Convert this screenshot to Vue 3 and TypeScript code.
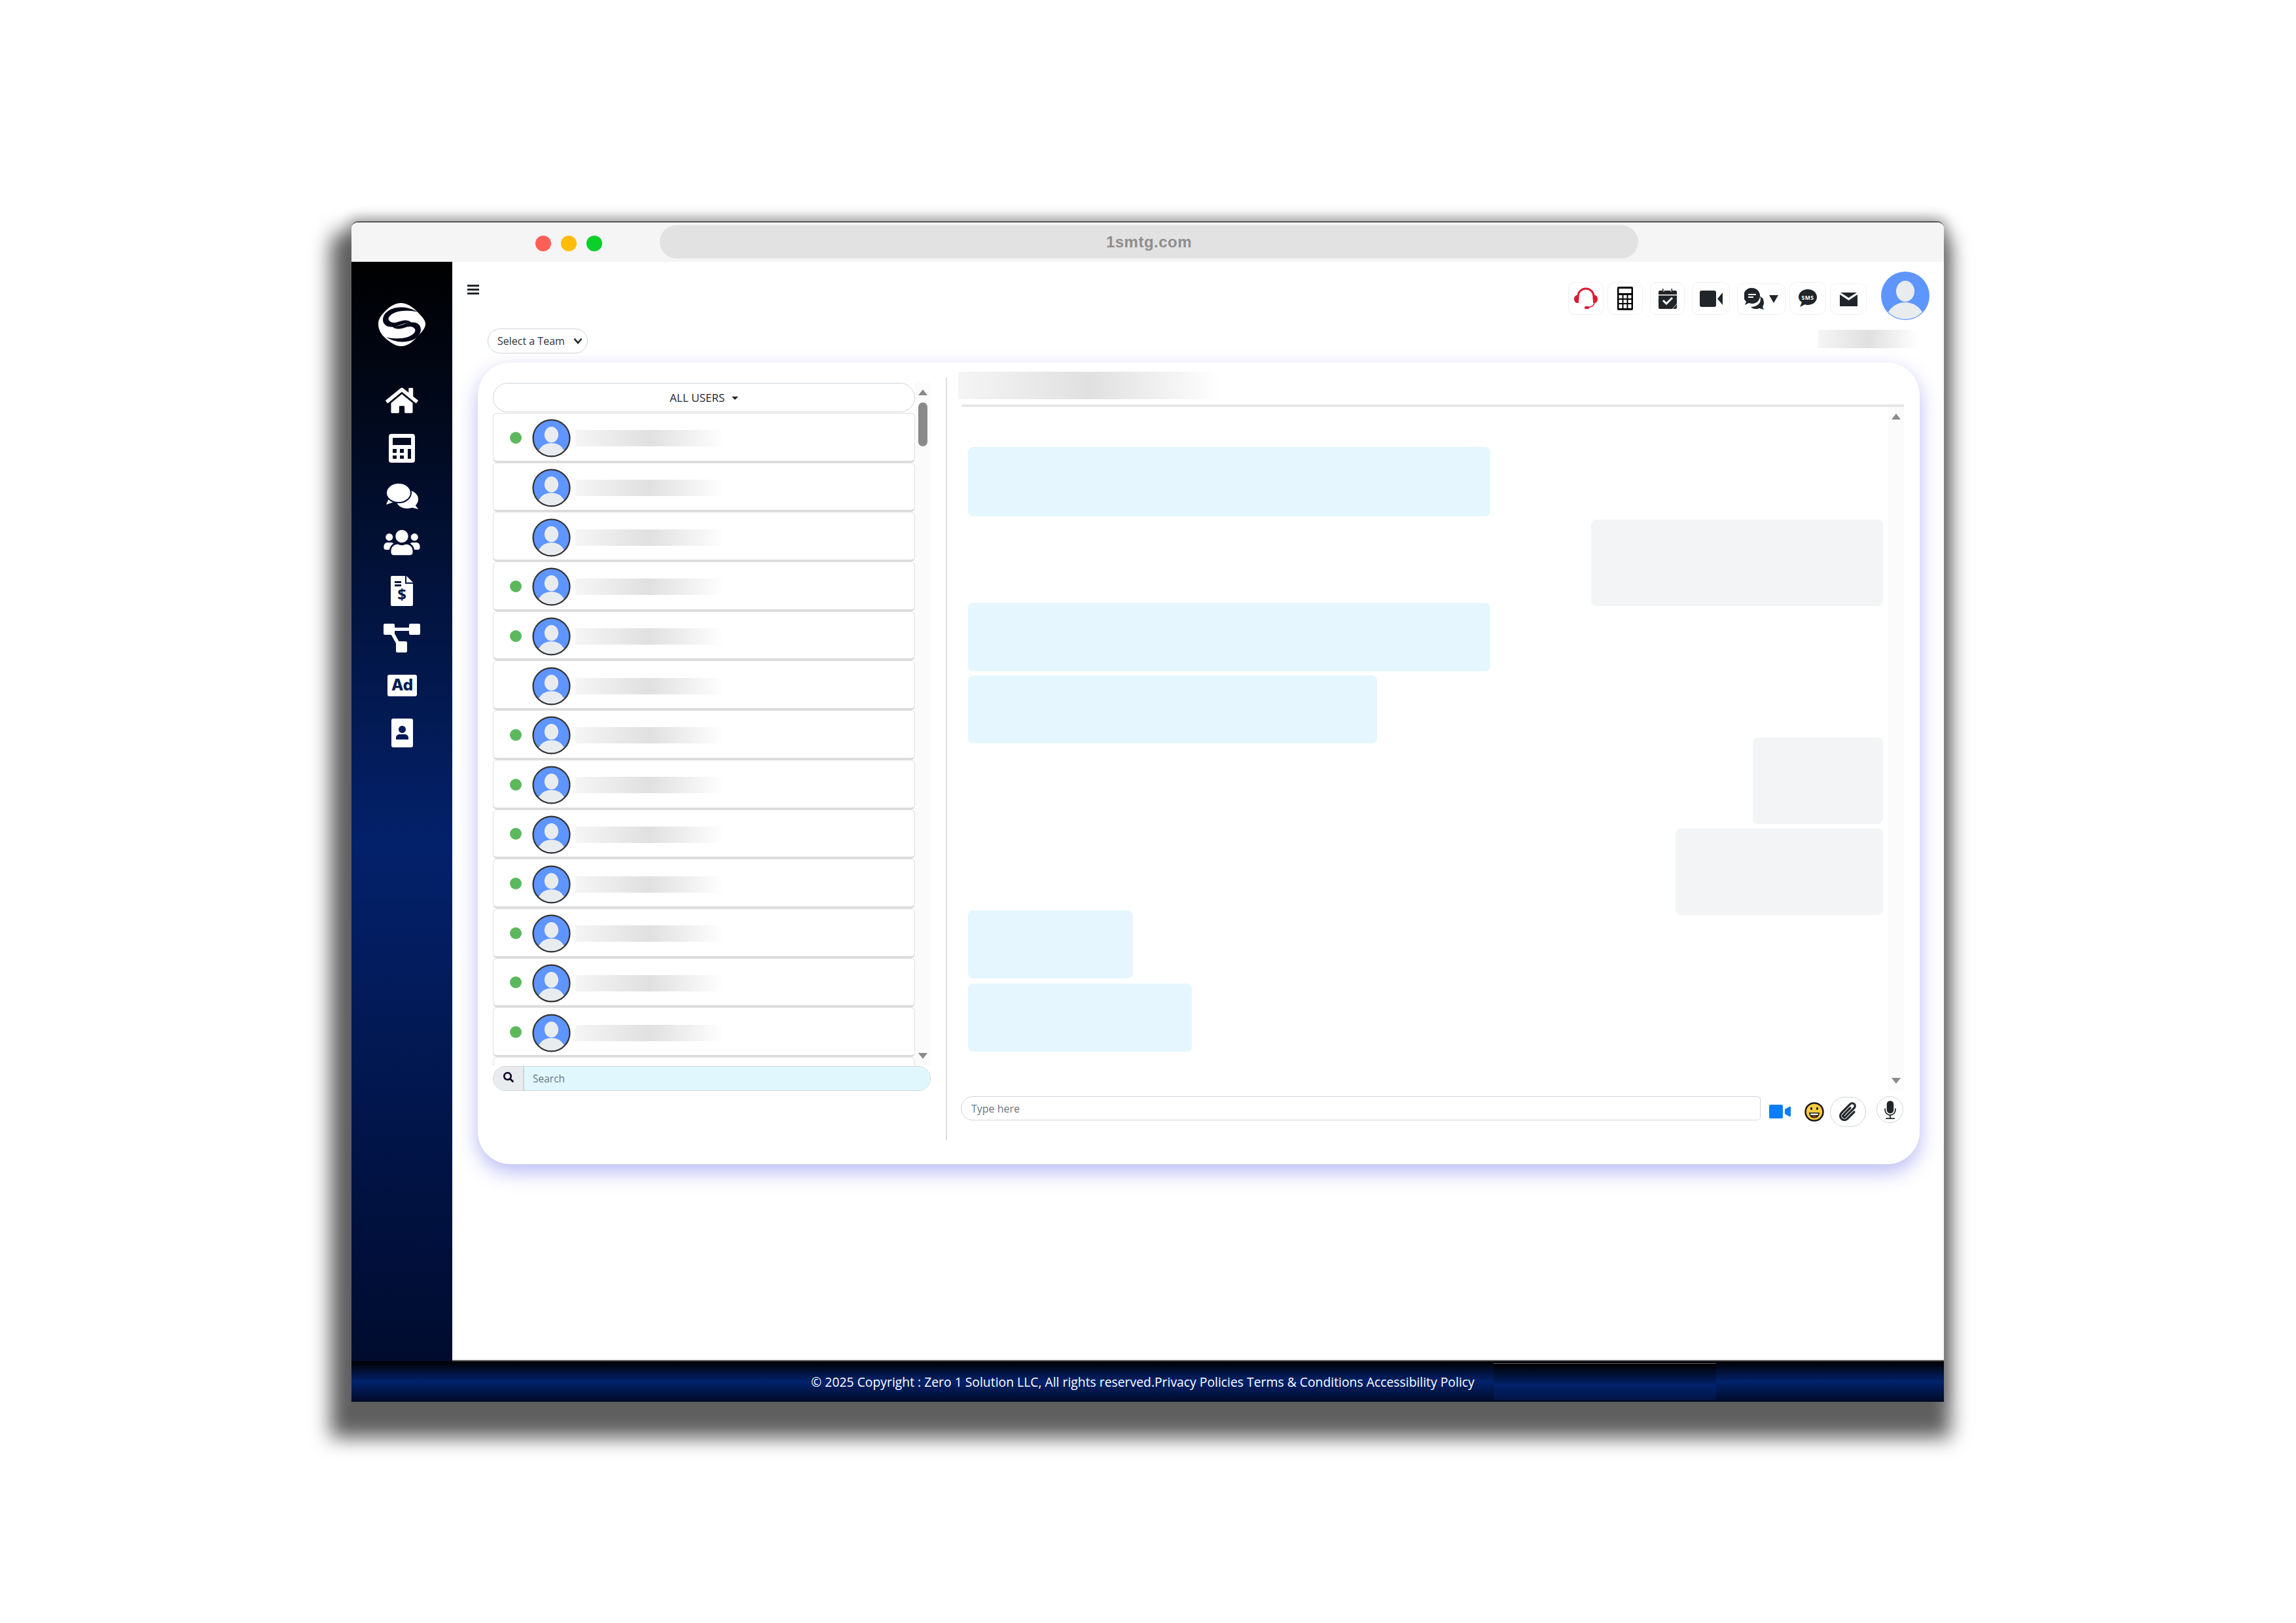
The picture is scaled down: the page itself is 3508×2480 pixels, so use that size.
<script setup lang="ts">
const contacts = [true, false, false, true, true, false, true, true, true, true, true, true, true]

const messages = [
  { side: 'in', width: 798, height: 106, gap: 0 },
  { side: 'out', width: 446, height: 132, gap: 5 },
  { side: 'in', width: 798, height: 105, gap: -5 },
  { side: 'in', width: 625, height: 104, gap: 6 },
  { side: 'out', width: 199, height: 132, gap: -9 },
  { side: 'out', width: 317, height: 132, gap: 7 },
  { side: 'in', width: 252, height: 104, gap: -7 },
  { side: 'in', width: 342, height: 104, gap: 8 },
]
</script>

<template>
  <div class="page">
    <div class="window">
      <div class="titlebar">
        <div class="lights">
          <span class="light red"></span>
          <span class="light yellow"></span>
          <span class="light green"></span>
        </div>
        <div class="url">1smtg.com</div>
      </div>

      <div class="body">
        <aside class="sidebar">
          <svg class="logo" viewBox="0 0 90 80" width="90" height="80">
            <path fill="#fff" d="M44 8C55 8 66 18 72 25C78 31 81 36 81 40C81 46 76 52 70 58C62 67 54 74 44 74C34 74 24 66 16 58C11 52 9 46 9 40C9 32 14 26 20 20C26 14 34 8 44 8Z" />
            <path fill="#000716" d="M69 22C56 13 36 12 24 20C15 26 14 36 19 41C25 47 36 44 44 41C52 38 60 37 63 43C60 34 50 33 42 36C34 39 28 39 25 34C23 30 28 25 36 22C46 19 60 19 69 22Z" />
            <path fill="#000716" transform="rotate(180 45 41)" d="M69 22C56 13 36 12 24 20C15 26 14 36 19 41C25 47 36 44 44 41C52 38 60 37 63 43C60 34 50 33 42 36C34 39 28 39 25 34C23 30 28 25 36 22C46 19 60 19 69 22Z" />
          </svg>

          <nav class="nav">
            <svg class="nav-icon" viewBox="0 0 576 512" width="50" height="44">
              <path d="M280.37 148.26L96 300.11V464a16 16 0 0 0 16 16l112.06-.29a16 16 0 0 0 15.92-16V368a16 16 0 0 1 16-16h64a16 16 0 0 1 16 16v95.64a16 16 0 0 0 16 16.05L464 480a16 16 0 0 0 16-16V300L295.67 148.26a12.19 12.19 0 0 0-15.3 0zM571.6 251.47L488 182.56V44.05a12 12 0 0 0-12-12h-56a12 12 0 0 0-12 12v72.61L318.47 43a48 48 0 0 0-61 0L4.34 251.47a12 12 0 0 0-1.6 16.9l25.5 31A12 12 0 0 0 45.15 301l235.22-193.74a12.19 12.19 0 0 1 15.3 0L530.9 301a12 12 0 0 0 16.9-1.6l25.5-31a12 12 0 0 0-1.7-16.93z" />
            </svg>
            <svg class="nav-icon" viewBox="0 0 40 44" width="40" height="44">
              <path fill-rule="evenodd" d="M4 0h32a4 4 0 0 1 4 4v36a4 4 0 0 1-4 4H4a4 4 0 0 1-4-4V4a4 4 0 0 1 4-4zM6 6v11h28V6zM6 23v6h6v-6zM17 23v6h6v-6zM29 23v15h5V23zM6 33v5h6v-5zM17 33v5h6v-5z" />
            </svg>
            <svg class="nav-icon gap-31" viewBox="0 0 50 40" width="50" height="40">
              <ellipse cx="33" cy="25" rx="17" ry="14" />
              <path d="M44 32l6 8-12-3z" />
              <path d="M5 24L1 33l12-4z" />
              <ellipse cx="20" cy="15" rx="19" ry="15" stroke="#010f38" stroke-width="2" />
            </svg>
            <svg class="nav-icon" viewBox="0 0 640 512" width="56" height="44">
              <path d="M96 224c35.3 0 64-28.7 64-64s-28.7-64-64-64-64 28.7-64 64 28.7 64 64 64zm448 0c35.3 0 64-28.7 64-64s-28.7-64-64-64-64 28.7-64 64 28.7 64 64 64zm32 32h-64c-17.6 0-33.5 7.1-45.1 18.6 40.3 22.1 68.9 62 75.1 109.4h66c17.7 0 32-14.3 32-32v-32c0-35.3-28.7-64-64-64zm-256 0c61.9 0 112-50.1 112-112S381.9 32 320 32 208 82.1 208 144s50.1 112 112 112zm76.8 32h-8.3c-20.8 10-43.9 16-68.5 16s-47.6-6-68.5-16h-8.3C179.6 288 128 339.6 128 403.2V432c0 26.5 21.5 48 48 48h288c26.5 0 48-21.5 48-48v-28.8c0-63.6-51.6-115.2-115.2-115.2zm-223.7-13.4C161.5 263.1 145.6 256 128 256H64c-35.3 0-64 28.7-64 64v32c0 17.7 14.3 32 32 32h65.9c6.3-47.4 34.9-87.3 75.2-109.4z" />
            </svg>
            <svg class="nav-icon" viewBox="0 0 34 46" width="34" height="46">
              <path fill-rule="evenodd" d="M2 0h20v12h12v32a2 2 0 0 1-2 2H2a2 2 0 0 1-2-2V2a2 2 0 0 1 2-2zM6 8v3h10V8zM6 13v3h10v-3z" />
              <path d="M24 0l10 10H24z" />
              <text class="dollar" x="17" y="37">$</text>
            </svg>
            <svg class="nav-icon gap-27" viewBox="0 0 56 44" width="56" height="44">
              <rect x="0" y="0" width="17" height="17" rx="2" />
              <rect x="39" y="0" width="17" height="17" rx="2" />
              <rect x="19" y="27" width="17" height="17" rx="2" />
              <rect x="14" y="6" width="28" height="5" />
              <path d="M10 14l5-2 9 16-5 2z" />
            </svg>
            <svg class="nav-icon gap-34" viewBox="0 0 45 33" width="45" height="33">
              <rect width="45" height="33" rx="3" />
              <text class="ad" x="22.5" y="24">Ad</text>
            </svg>
            <svg class="nav-icon gap-34" viewBox="0 0 33 44" width="33" height="44">
              <path fill-rule="evenodd" d="M3 0h27a3 3 0 0 1 3 3v38a3 3 0 0 1-3 3H3a3 3 0 0 1-3-3V3a3 3 0 0 1 3-3zM16.500 11a5.500 5.500 0 1 0 0 11 5.500 5.500 0 0 0 0-11zM7 32h19v-3c0-3-3-5-6-5h-7c-3 0-6 2-6 5z" />
            </svg>
          </nav>
        </aside>

        <main class="main">
          <div class="topbar">
            <svg class="menu" viewBox="0 0 18 15" width="18" height="15">
              <rect y="0" width="18" height="3" />
              <rect y="6" width="18" height="3" />
              <rect y="12" width="18" height="3" />
            </svg>
            <div class="tools">
              <button class="tool w54">
                <svg viewBox="0 0 36 36" width="36" height="36">
                  <path d="M6 20V15a12 12 0 0 1 24 0v5" fill="none" stroke="#dc1a32" stroke-width="3" />
                  <path d="M4 13c-3 1-4 3-4 6s2 6 5 6h2V13zM32 13c3 1 4 3 4 6s-2 6-5 6h-2V13z" fill="#dc1a32" />
                  <path d="M31 24c0 5-4 7-10 8" fill="none" stroke="#dc1a32" stroke-width="1.500" />
                  <rect x="16" y="30" width="7" height="4" rx="1.500" fill="#dc1a32" />
                </svg>
              </button>
              <button class="tool w54 ml6">
                <svg viewBox="0 0 24 36" width="24" height="36">
                  <path fill="#000" fill-rule="evenodd" d="M2 0h20a2 2 0 0 1 2 2v32a2 2 0 0 1-2 2H2a2 2 0 0 1-2-2V2a2 2 0 0 1 2-2zM2.500 3v7h19V3zM2.500 13v5h5v-5zM9.500 13v5h5v-5zM16.500 13v5h5v-5zM2.500 20v5h5v-5zM9.500 20v5h5v-5zM16.500 20v5h5v-5zM2.500 27v6h5v-6zM9.500 27v6h5v-6zM16.500 27v6h5v-6z" />
                </svg>
              </button>
              <button class="tool w53 ml11">
                <svg viewBox="0 0 28 32" width="28" height="32">
                  <path fill="#212529" fill-rule="evenodd" d="M2 4h4V1h1.500v5h1V4h10v2h1V1H21v3h5a2 2 0 0 1 2 2v4H0V6a2 2 0 0 1 2-2zM0 11.500h28V24l-7 8H2a2 2 0 0 1-2-2zM8 18l-2 2 6 6 10-10-2-2-8 8z" />
                  <path fill="#212529" d="M22 32l6-7v5a2 2 0 0 1-2 2z" />
                </svg>
              </button>
              <button class="tool w58 ml11">
                <svg viewBox="0 0 35 25" width="35" height="25">
                  <rect width="25" height="25" rx="3" fill="#212529" />
                  <path d="M27 12.500L35 3v19z" fill="#212529" />
                </svg>
              </button>
              <button class="tool w74 ml11 low">
                <svg viewBox="0 0 30 34" width="30" height="34">
                  <path d="M22 12a11 11 0 0 1 8 10c0 3-1 5-2 7l2 4-7-2c-2 1-4 1-6 1-3 0-5-1-7-3 8 0 15-4 15-12 0-2-1-4-3-5z" fill="#212529" />
                  <path d="M12 0a12 12 0 0 1 12 12c0 7-5 12-12 12-2 0-4-1-5-1l-6 3 2-5a12 12 0 0 1 9-21z" fill="#212529" />
                  <rect x="6" y="9" width="12" height="2" fill="#fff" />
                  <rect x="6" y="13" width="8" height="2" fill="#fff" />
                </svg>
                <span class="tool-caret"></span>
              </button>
              <button class="tool w56 ml6">
                <svg viewBox="0 0 28 28" width="28" height="28">
                  <path d="M14 0c8 0 14 5 14 12s-6 12-14 12c-1 0-3 0-4-1l-8 4 3-7c-3-2-5-5-5-8C0 5 6 0 14 0z" fill="#212529" />
                  <text class="sms" x="14" y="15.500">SMS</text>
                </svg>
              </button>
              <button class="tool w56 ml6 low">
                <svg viewBox="0 0 27 21" width="27" height="21">
                  <path d="M0 3l13.500 9L27 3v18H0z" fill="#212529" />
                  <path d="M1 0h25L13.500 8z" fill="#212529" />
                </svg>
              </button>
            </div>
            <svg class="profile" viewBox="0 0 74 74" width="74" height="74">
              <circle cx="37" cy="37" r="37" fill="#5f95ff" />
              <ellipse cx="37" cy="30" rx="14" ry="16" fill="#e9ecef" />
              <path d="M11 62A30 30 0 0 1 63 62A37 37 0 0 1 11 62Z" fill="#e9ecef" />
            </svg>
          </div>

          <div class="team-row">
            <select class="team-select">
              <option>Select a Team</option>
            </select>
            <div class="blur team-blur"></div>
          </div>

          <section class="card">
            <div class="users">
              <div class="user-list">
                <div class="user-rows">
                  <button class="all-users">ALL USERS <span class="caret"></span></button>
                  <div v-for="(online, i) in contacts" :key="i" class="user-row">
                    <span class="dot" :class="{ off: !online }"></span>
                    <svg class="avatar" viewBox="-2 -2 78 78" width="59" height="59">
                      <circle cx="37" cy="37" r="37" fill="#5f95ff" />
                      <ellipse cx="37" cy="30" rx="14" ry="16" fill="#e9ecef" />
                      <path d="M11 62A30 30 0 0 1 63 62A37 37 0 0 1 11 62Z" fill="#e9ecef" />
                      <circle cx="37" cy="37" r="37" fill="none" stroke="#333" stroke-width="3" />
                    </svg>
                    <div class="blur user-blur"></div>
                  </div>
                  <div class="user-row"></div>
                </div>
                <div class="scroll-track">
                  <span class="arrow up"></span>
                  <span class="thumb"></span>
                  <span class="arrow down list-down"></span>
                </div>
              </div>
              <div class="search">
                <span class="search-icon">
                  <svg viewBox="0 0 512 512" width="16" height="16">
                    <path d="M505 442.700L405.300 343c-4.500-4.500-10.600-7-17-7H372c27.600-35.300 44-79.700 44-128C416 93.100 322.900 0 208 0S0 93.100 0 208s93.100 208 208 208c48.300 0 92.700-16.400 128-44v16.300c0 6.400 2.500 12.500 7 17l99.700 99.700c9.400 9.400 24.600 9.400 33.900 0l28.300-28.300c9.400-9.400 9.400-24.600.1-34zM208 336c-70.700 0-128-57.200-128-128 0-70.700 57.200-128 128-128 70.700 0 128 57.200 128 128 0 70.700-57.200 128-128 128z" fill="#000228" />
                  </svg>
                </span>
                <input class="search-input" placeholder="Search" />
              </div>
            </div>

            <div class="divider"></div>

            <div class="chat">
              <div class="blur chat-title"></div>
              <div class="chat-rule"></div>
              <div class="chat-log">
                <div class="messages">
                  <div
                    v-for="(m, i) in messages"
                    :key="i"
                    class="bubble"
                    :class="m.side"
                    :style="{ width: m.width + 'px', height: m.height + 'px', marginTop: m.gap + 'px' }"
                  ></div>
                </div>
                <div class="scroll-track">
                  <span class="arrow up chat-up"></span>
                  <span class="arrow down chat-down"></span>
                </div>
              </div>
              <div class="composer">
                <input class="message-input" placeholder="Type here" />
                <svg class="send-video" viewBox="0 0 33 21" width="33" height="21">
                  <rect width="21" height="21" rx="2" fill="#0d7dff" />
                  <path d="M24 7l7-4c1-.5 2 0 2 1v13c0 1-1 1.500-2 1l-7-4z" fill="#0d7dff" />
                </svg>
                <svg class="emoji" viewBox="0 0 30 30" width="30" height="30">
                  <circle cx="15" cy="15" r="13.500" fill="#fbcb3c" stroke="#1a1a1a" stroke-width="2.500" />
                  <ellipse cx="10.500" cy="10" rx="1.500" ry="2.200" fill="#1a1a1a" />
                  <ellipse cx="19.500" cy="10" rx="1.500" ry="2.200" fill="#1a1a1a" />
                  <path d="M7 16h16c0 5-3.500 8.500-8 8.500S7 21 7 16z" fill="#1a1a1a" />
                  <path d="M9 17.500h12c0 1-.3 1.800-.7 2.500H9.700c-.4-.7-.7-1.500-.7-2.500z" fill="#fff" />
                  <path d="M11.500 22c1 .7 2.200 1 3.500 1s2.500-.3 3.500-1c-1-.6-2.200-.8-3.500-.8s-2.500.2-3.500.8z" fill="#e8402f" />
                </svg>
                <button class="attach">
                  <svg viewBox="0 0 16 16" width="34" height="34">
                    <g transform="rotate(45 8 8)">
                      <path d="M4.500 3a2.500 2.500 0 0 1 5 0v9a1.500 1.500 0 0 1-3 0V5a.5.5 0 0 1 1 0v7a.5.5 0 0 0 1 0V3a1.500 1.500 0 1 0-3 0v9a2.500 2.500 0 0 0 5 0V5a.5.5 0 0 1 1 0v7a3.500 3.500 0 1 1-7 0V3z" fill="#212529" stroke="#212529" stroke-width=".5" />
                    </g>
                  </svg>
                </button>
                <button class="mic">
                  <svg viewBox="0 0 16 16" width="28" height="28">
                    <path d="M5 3a3 3 0 0 1 6 0v5a3 3 0 0 1-6 0V3z" fill="#212529" />
                    <path d="M3.500 6.500A.5.5 0 0 1 4 7v1a4 4 0 0 0 8 0V7a.5.5 0 0 1 1 0v1a5 5 0 0 1-4.500 4.975V15h3a.5.5 0 0 1 0 1h-7a.5.5 0 0 1 0-1h3v-2.025A5 5 0 0 1 3 8V7a.5.5 0 0 1 .5-.5z" fill="#212529" />
                  </svg>
                </button>
              </div>
            </div>
          </section>
        </main>
      </div>

      <footer class="footer">
        <p class="copyright">© 2025 Copyright : Zero 1 Solution LLC, All rights reserved.Privacy Policies Terms &amp; Conditions Accessibility Policy</p>
        <div class="footer-patch"></div>
      </footer>
    </div>
  </div>
</template>

<style scoped>
.page {
  width: 3508px;
  height: 2480px;
  padding: 338px 0 0 537px;
  box-sizing: border-box;
  background: #fff;
  overflow: hidden;
  font-family: "Open Sans", "Liberation Sans", sans-serif;
}

.window {
  width: 2433px;
  height: 1804px;
  display: flex;
  flex-direction: column;
  background: #fff;
  border-radius: 10px 10px 0 0;
  border-top: 2px solid #555;
  box-sizing: border-box;
  box-shadow: -11px 34px 30px 21px #5f5f5f, 0 -2px 18px 4px rgba(0, 0, 0, 0.28);
}

.titlebar {
  height: 60px;
  flex: none;
  display: flex;
  align-items: flex-start;
  background: #f5f5f5;
  border-radius: 10px 10px 0 0;
}
.lights {
  display: flex;
  gap: 15px;
  margin: 20px 0 0 281px;
}
.light {
  width: 24px;
  height: 24px;
  border-radius: 50%;
}
.red {
  background: #ff5f57;
}
.yellow {
  background: #ffbd0a;
}
.green {
  background: #0bcf2a;
}
.url {
  width: 1495px;
  height: 51px;
  margin: 4px 0 0 88px;
  border-radius: 26px;
  background: #e2e2e2;
  color: #8e8e8e;
  font: bold 24px/51px "Liberation Sans", sans-serif;
  letter-spacing: 0.5px;
  text-align: center;
}

.body {
  flex: 1;
  display: flex;
  min-height: 0;
}

.sidebar {
  width: 154px;
  flex: none;
  display: flex;
  flex-direction: column;
  align-items: center;
  background: linear-gradient(180deg, #000 0%, #03216b 53%, #000b2e 100%);
}
.logo {
  margin-top: 55px;
}
.nav {
  margin-top: 55px;
  display: flex;
  flex-direction: column;
  align-items: center;
  gap: 29px;
}
.nav-icon {
  fill: #fff;
}
.gap-27 {
  margin-top: -2px;
}
.gap-31 {
  margin-top: 2px;
}
.gap-34 {
  margin-top: 5px;
}
.dollar {
  fill: #021648;
  font: bold 24px "Open Sans", sans-serif;
  text-anchor: middle;
}
.ad {
  fill: #021b55;
  font: 800 24px "Inter", sans-serif;
  text-anchor: middle;
}
.sms {
  fill: #fff;
  font: bold 8.5px "Open Sans", sans-serif;
  letter-spacing: 0.6px;
  text-anchor: middle;
}

.main {
  flex: 1;
  min-width: 0;
  border-bottom: 2px solid #6a6a6a;
}

.topbar {
  display: flex;
  align-items: flex-start;
  padding: 15px 22px 0 23px;
}
.menu {
  margin-top: 20px;
  fill: #212529;
}
.tools {
  margin-left: auto;
  margin-top: 16px;
  display: flex;
  align-items: flex-end;
}
.tool {
  height: 50px;
  padding: 0;
  display: flex;
  align-items: center;
  justify-content: center;
  background: #fff;
  border: 1.5px solid #eef0f3;
  border-radius: 10px;
  box-sizing: border-box;
}
.w53 {
  width: 53px;
}
.w54 {
  width: 54px;
}
.w56 {
  width: 56px;
}
.w58 {
  width: 58px;
}
.w74 {
  width: 74px;
  gap: 8px;
}
.ml6 {
  margin-left: 6px;
}
.ml11 {
  margin-left: 11px;
}
.low {
  height: 48px;
}
.tool-caret {
  width: 0;
  height: 0;
  border-left: 7px solid transparent;
  border-right: 7px solid transparent;
  border-top: 12px solid #212529;
}
.profile {
  margin-left: 22px;
  flex: none;
}

.team-row {
  display: flex;
  align-items: flex-start;
  justify-content: space-between;
  margin-top: 13px;
  padding: 0 39px 0 54px;
}
.team-select {
  width: 153px;
  height: 38px;
  padding: 0 0 0 14px;
  appearance: none;
  background: #fff url("data:image/svg+xml,%3Csvg xmlns='http://www.w3.org/2000/svg' viewBox='0 0 14 10'%3E%3Cpath d='M1.500 1.500L7 8l5.500-6.500' fill='none' stroke='%23212529' stroke-width='2.600'/%3E%3C/svg%3E") no-repeat right 7px center / 14px 10px;
  border: 1.5px solid #ced4da;
  border-radius: 19px;
  color: #333;
  font: 16px "Open Sans", sans-serif;
}
.blur {
  background: linear-gradient(90deg, #f5f5f5 0%, #e0e0e0 50%, #fff 100%);
}
.team-blur {
  width: 153px;
  height: 28px;
  margin-top: 2px;
}

.card {
  width: 2203px;
  height: 1225px;
  margin: 14px 0 0 39px;
  padding: 14px 24px 37px 23px;
  box-sizing: border-box;
  display: flex;
  background: #fff;
  border-radius: 50px;
  box-shadow: 0 12px 30px rgba(170, 170, 242, 0.8);
}

.users {
  width: 669px;
  flex: none;
  margin-top: 17px;
}
.user-list {
  height: 1043px;
  display: flex;
  overflow: hidden;
}
.user-rows {
  width: 645px;
  flex: none;
}
.all-users {
  width: 100%;
  height: 45px;
  margin-bottom: 1px;
  padding: 0;
  background: #fff;
  border: 1.5px solid #ced4da;
  border-radius: 23px;
  color: #212529;
  font: 17px "Open Sans", sans-serif;
}
.caret {
  display: inline-block;
  width: 0;
  height: 0;
  margin-left: 6px;
  vertical-align: 3px;
  border-left: 5px solid transparent;
  border-right: 5px solid transparent;
  border-top: 5px solid #212529;
}
.user-row {
  height: 75.7px;
  padding: 2px 0 0 25px;
  display: flex;
  align-items: center;
  box-sizing: border-box;
  border: 1px solid #e0e0e0;
  border-bottom: 3px solid #dcdcdc;
  border-radius: 6px;
}
.dot {
  width: 18px;
  height: 18px;
  flex: none;
  border-radius: 50%;
  background: #5cb85c;
}
.dot.off {
  visibility: hidden;
}
.avatar {
  flex: none;
  margin: 2px 0 0 16px;
}
.user-blur {
  width: 227px;
  height: 25px;
  margin: 2px 0 0 7px;
}

.scroll-track {
  width: 24px;
  flex: none;
  position: relative;
  background: #fbfbfb;
}
.arrow {
  position: absolute;
  left: 5px;
  width: 0;
  height: 0;
  border-left: 7px solid transparent;
  border-right: 7px solid transparent;
}
.arrow.up {
  top: 10px;
  border-bottom: 9px solid #8a8a8a;
}
.arrow.down {
  border-top: 9px solid #8a8a8a;
}
.list-down {
  bottom: 10px;
}
.thumb {
  position: absolute;
  top: 30px;
  left: 5px;
  width: 14px;
  height: 67px;
  border-radius: 7px;
  background: #8a8a8a;
}

.search {
  height: 38px;
  margin-top: 1px;
  display: flex;
  box-sizing: border-box;
  border: 1.5px solid #ced4da;
  border-radius: 19px;
  overflow: hidden;
}
.search-icon {
  width: 47px;
  flex: none;
  display: flex;
  align-items: center;
  justify-content: center;
  padding-bottom: 4px;
  box-sizing: border-box;
  background: #e9ecef;
  border-right: 2px solid #ced4da;
}
.search-input {
  flex: 1;
  min-width: 0;
  padding: 0 13px;
  border: 0;
  outline: 0;
  background: #e0f7fe;
  font: 15.5px "Open Sans", sans-serif;
}
.search-input::placeholder,
.message-input::placeholder {
  color: #6c757d;
}

.divider {
  width: 2px;
  flex: none;
  margin: 9px 0 0 23px;
  background: #dedede;
}

.chat {
  flex: 1;
  min-width: 0;
  margin-left: 17px;
  display: flex;
  flex-direction: column;
}
.chat-title {
  width: 402px;
  height: 42px;
  flex: none;
}
.chat-rule {
  height: 4px;
  flex: none;
  margin: 8px 0 0 5px;
  background: #e6e6e6;
}
.chat-log {
  height: 1044px;
  flex: none;
  display: flex;
}
.messages {
  flex: 1;
  min-width: 0;
  display: flex;
  flex-direction: column;
  padding: 61px 8px 0 15px;
}
.bubble {
  flex: none;
  border-radius: 8px;
}
.bubble.in {
  background: #e5f6fe;
}
.bubble.out {
  align-self: flex-end;
  background: #f3f4f6;
}
.chat-up {
  top: 11px;
  left: 5px;
}
.chat-down {
  bottom: 10px;
}

.composer {
  flex: 1;
  padding: 9px 0 0 4px;
  display: flex;
  align-items: flex-start;
}
.message-input {
  width: 1222px;
  height: 37px;
  flex: none;
  padding: 0 15px;
  box-sizing: border-box;
  border: 1.5px solid #ced4da;
  border-radius: 19px 5px 5px 19px;
  outline: 0;
  font: 16px "Open Sans", sans-serif;
}
.send-video {
  flex: none;
  margin: 13px 0 0 13px;
}
.emoji {
  flex: none;
  margin: 9px 0 0 21px;
}
.attach {
  width: 55px;
  height: 46px;
  flex: none;
  margin: 1px 0 0 9px;
  padding: 0;
  display: flex;
  align-items: center;
  justify-content: center;
  background: #fff;
  border: 1.5px solid #ced4da;
  border-radius: 23px;
}
.mic {
  width: 41px;
  height: 41px;
  flex: none;
  margin: 0 0 0 16px;
  padding: 0;
  display: flex;
  align-items: center;
  justify-content: center;
  background: #fff;
  border: 1.5px solid #ced4da;
  border-radius: 50%;
}

.footer {
  position: relative;
  height: 62px;
  flex: none;
  padding-right: 15px;
  display: flex;
  align-items: center;
  justify-content: center;
  background: linear-gradient(180deg, #000 0%, #02226c 50%, #000a26 100%);
}
.copyright {
  margin: 0;
  color: #fff;
  font-size: 19.35px;
  white-space: nowrap;
}
.footer-patch {
  position: absolute;
  left: 1745px;
  top: 3px;
  bottom: 3px;
  width: 340px;
  border-top: 1px solid #666;
  background: linear-gradient(180deg, #000 0%, #02226c 60%, #011545 100%);
}
</style>

<style>
html,
body {
  margin: 0;
  background: #fff;
}
</style>
